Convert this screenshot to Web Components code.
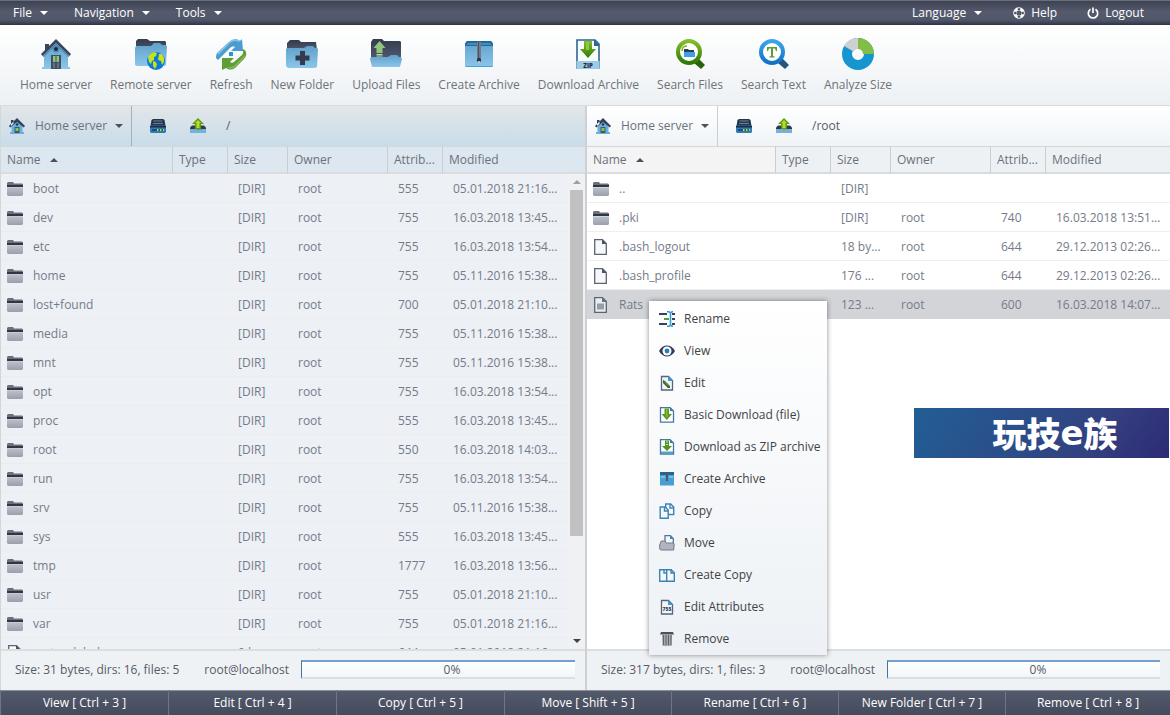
<!DOCTYPE html>
<html lang="en">
<head>
<meta charset="utf-8">
<meta name="viewport" content="width=device-width, initial-scale=1">
<title>File manager</title>
<style>
  html, body { height: 100%; }
  body { margin: 0; font: 12px/16px "Open Sans", sans-serif; color: #6b717c; background: #fff; }
</style>
</head>
<body>
<fm-app></fm-app>

<script>
/* ---------- icons ---------- */
const defs = `<defs>
<linearGradient id="b" x1="0" y1="0" x2="0" y2="1"><stop offset="0" stop-color="#5fa0ca"/><stop offset="1" stop-color="#8cc6ea"/></linearGradient>
<linearGradient id="d" x1="0" y1="0" x2="0" y2="1"><stop offset="0" stop-color="#333c4e"/><stop offset="1" stop-color="#4e586c"/></linearGradient>
<linearGradient id="g" x1="0" y1="0" x2="0" y2="1"><stop offset="0" stop-color="#86bd28"/><stop offset="1" stop-color="#2e7a06"/></linearGradient>
<linearGradient id="s" x1="0" y1="0" x2="0" y2="1"><stop offset="0" stop-color="#b9bec8"/><stop offset="1" stop-color="#9a9fac"/></linearGradient>
<linearGradient id="z" x1="0" y1="0" x2="0" y2="1"><stop offset="0" stop-color="#3aa5ee"/><stop offset="1" stop-color="#1272c4"/></linearGradient></defs>`;

const page16 = '<path d="M2.5 1.5h7l4 4v9.500h-11z" fill="#f4f6fa" stroke="#55657f" stroke-width="1.300"/><path d="M9 1l5 5H9z" fill="#4397d3"/>';
const icons = {
  home: [32, `<path d="M4 17L16 5l12 12v12h2v2H2v-2h2z" fill="url(#b)"/><path d="M5 6h4v5l-4 4z" fill="#3c4558"/><path d="M16 1L1 16l1.500 2L16 5l13.500 13 1.500-2z" fill="#39435a"/><path d="M2.500 18L16 5l13.500 13-1 1L16 7 3.500 19z" fill="#4c86ac"/><circle cx="16" cy="11" r="2" fill="#1b2636"/><circle cx="16" cy="11" r="3" fill="none" stroke="#4d83a8"/><path d="M11 17h10v14H11z" fill="#3f5265"/><path d="M13 18h2.500v6H13zM16.500 18H19v6h-2.500z" fill="#96c47c"/><path d="M13 25h2v5h-2zM17 25h2v5h-2z" fill="#65717e"/>`],
  home16: [16, `<path d="M2.500 8L8 3l5.500 5v6H15v2H1v-2h1.500z" fill="#69b0de"/><path d="M2 2h2.500v4L2 8zM8 0L0 8l1.200 1.500L8 4l6.800 5.500L16 8z" fill="#34405a"/><circle cx="8" cy="6.500" r="1.200" fill="#27374b"/><path d="M5.500 9h5v6h-5z" fill="#3f5a66"/><path d="M6.500 10h3v3h-3z" fill="#8cc34a"/>`],
  remote: [32, `<path d="M1 13V3l2-2h9l3 2h15l1 1v10z" fill="url(#d)"/><path d="M0 10l1-2h15l3-3h6l2 2h4l1 1-1 19-2 1H2l-2-1z" fill="url(#b)"/><circle cx="21" cy="23" r="9" fill="#0f79d6"/><path d="M13 19c1-2 3-4 6-5l3 1-1 3-2 1v3l-2 1-1 3-2-2zM18 23l3 1 1 3-2 4-2-3zM24 16l3 0 2 4 0 4-2 3-1-4-3-1z" fill="#c2e41d"/>`],
  refresh: [32, `<path d="M1 20C1 18 1 16 3 14L14 4c3-3 8-4 11-1l2-2 1 12H16l4-4c-2-1-4 0-5 1l-9 9-3 3z" fill="#4b9ccf"/><path d="M3 14L14 4c3-3 8-4 11-1l-1 1c-3-2-7-1-10 2L3 17z" fill="#8bc2e4"/><path d="M27 11c3 0 5 3 4 7-1 2-2 3-4 5l-7 7c-3 2-6 2-9 0l-4 2V20h12l-4 4c1 1 3 1 4 0l8-7c1-1 2-3 0-6z" fill="#5f9d35"/><path d="M31 16c-1 3-2 4-4 6l-7 7c-2 2-6 2-8 0 4 0 6 0 8-2l8-8z" fill="#85b957"/><path d="M14 14h4v4h-4z" fill="#2c94d2"/>`],
  newfolder: [32, `<path d="M1 12V5l3-3h9l2 2h15l1 8z" fill="url(#d)"/><path d="M0 11l1-1h17l3-2h6l2 2h2l1 1-1 18-2 1H2l-2-2z" fill="url(#b)"/><path d="M14 13h5v4.500h4.500v5H19V27h-5v-4.500H9.500v-5H14z" fill="#333b4c"/>`],
  upload: [32, `<path d="M1 20V4l2-3h9l2 2h16l1 1v15z" fill="url(#d)"/><path d="M9.500 3l6 7h-3v5h-6v-5h-3z" fill="#93c47e"/><path d="M6.500 16h6v1.500h-6zM6.500 18.500h6V20h-6z" fill="#b7dba2"/><path d="M0 21l1-2h17l3-2h6l2 2h2l1 2-2 8H2z" fill="url(#b)"/>`],
  archive: [32, `<path d="M2 5l2-2h24l2 2v23l-1 1H3l-1-1z" fill="url(#b)"/><path d="M2 6l2-3h24l2 3v2H2z" fill="#24699a"/><path d="M5 5h9v2H3zM18 5h9l2 2H18z" fill="#3f8ebd"/><path d="M14 4h4v16h-4z" fill="#727c8c"/><path d="M15 4h1v17h-1z" fill="#4a5464"/><circle cx="16" cy="22" r="2.200" fill="#2b3542"/><circle cx="16" cy="24" r="1" fill="#c7e3f4"/><path d="M2.500 28.500h27" stroke="#3ea7e2"/>`],
  download: [32, `<path d="M5 2h18l4 4v24H5z" fill="#f8fbfd" stroke="#2d6690" stroke-width="1.600"/><path d="M22 1.500L28 8h-6z" fill="#2d6690"/><path d="M4.500 23h23v8h-23z" fill="#9ccbe8"/><path d="M12 3h8v8h4l-8 9-8-9h4z" fill="url(#g)"/><path d="M14 4h3v8h-3z" fill="#93c443"/><text x="16" y="29.500" text-anchor="middle" font-family="Open Sans, sans-serif" font-weight="800" font-size="6" fill="#20304a">ZIP</text>`],
  sfiles: [32, `<path d="M21 22l3-2 7 7-4 4-7-6z" fill="#286307"/><circle cx="15" cy="14" r="11" fill="#fff" stroke="url(#g)" stroke-width="4"/><path d="M10 11h4l1 1h5v3H10z" fill="#333c4e"/><path d="M10 14h11v5H10z" fill="#3ba0e5"/><path d="M8 13c0-3 2-5 5-5" stroke="#7db52d" stroke-width="1.500" fill="none"/>`],
  stext: [32, `<path d="M22 22l3-2 7 7-4 4-7-6z" fill="#24547f"/><circle cx="15" cy="14" r="11" fill="#fff" stroke="url(#z)" stroke-width="4"/><path d="M10 9h10v4h-1l-1-2.500h-2v7.500l1.500.5v1h-5v-1l1.500-.5v-7.500h-2L11 13h-1z" fill="#5d9d35"/>`],
  analyze: [32, `<circle cx="16" cy="16" r="11" fill="none" stroke="#1596d1" stroke-width="10"/><path d="M16 0a16 16 0 0 1 16 16H21a5 5 0 0 0-5-5z" fill="#82bd45"/><path d="M16 0v11a5 5 0 0 0-4.500 2.500L2 8A16 16 0 0 1 16 0z" fill="#cdd1d4"/>`],
  folder: [16, `<path d="M0 5.500V2l1-1h5l1 1.500h8l1 1v2z" fill="#6b707a"/><path d="M0 4h16v2.200H0z" fill="#2f3746"/><path d="M0 7h16v7l-1 1H1l-1-1z" fill="url(#s)"/>`],
  file: [16, `<path d="M1.700.700H9.500L13.300 4.500v10.800H1.700z" fill="#f7f8fb" stroke="#5b6474" stroke-width="1.300"/><path d="M9 .500L13.500 5H9z" fill="#4a5362"/>`],
  text: [16, `<path d="M1.700.700H9.500L13.300 4.500v10.800H1.700z" fill="#e9ecf1" stroke="#5b6474" stroke-width="1.300"/><path d="M9 .500L13.500 5H9z" fill="#6a7280"/><path d="M4 6.500h7v6H4z" fill="#989da8"/>`],
  drive: [16, `<path d="M3 1h10l1.500 1 1 6H.500l1-6z" fill="#26344a"/><path d="M3.500 3h9M3 5.500h10" stroke="#6f8094"/><path d="M0 7.500h16V14l-1 1H1l-1-1z" fill="#2d7db8"/><path d="M0 8h16v1.500H0z" fill="#1d2c42"/><path d="M2 11h12v2H2z" fill="#214f73"/><path d="M7 11h1.500v2H7zM10 11h1.500v2H10zM13 11h1v2h-1z" fill="#b5dd2c"/>`],
  up: [16, `<path d="M0 9.500l2-2h12l2 2v2H0z" fill="#2e3a50"/><path d="M0 11h5l1 1h5l1-1h4v4H0z" fill="#72b3db"/><path d="M8 0l6 6h-3v5H5V6H2z" fill="#5b9b0a"/><path d="M8 2l3 3H9.500v5h-3V5H5z" fill="#b5dd22"/>`],
  rename: [16, `<path d="M0 3h8M0 13h8M13 3h3M13 13h3" stroke="#36405a" stroke-width="2"/><path d="M5 8h5" stroke="#58a038" stroke-width="2"/><path d="M13 8h3" stroke="#36405a" stroke-width="2"/><path d="M8 .800h2l1.500 1L13 .800h1M8 15.200h2l1.500-1 1.500 1h1M11.500 1v14" stroke="#3b9ad6" stroke-width="1.600" fill="none"/>`],
  view: [16, `<path d="M0 8c4-7.300 12-7.300 16 0-4 7.300-12 7.300-16 0z" fill="#333d54"/><circle cx="8" cy="8" r="4.500" fill="#fff"/><circle cx="8" cy="8" r="2.400" fill="#247ebd"/>`],
  edit: [16, page16 + `<path d="M4 5l2 1 5 5v2H9L4 8z" fill="#2d5726"/><path d="M5 6.500l5 5" stroke="#89b648"/>`],
  dl: [16, `<path d="M1.500.700h9.500l3.500 3.500v11h-13z" fill="#fff" stroke="#4a7899" stroke-width="1.300"/><path d="M11 0l4 4h-4z" fill="#347aa9"/><path d="M5.500 1.500h4.500V7h3l-5.200 6L2.500 7h3z" fill="#5a9a1e"/><path d="M7 2h1.500v8H7z" fill="#82b93c"/>`],
  zip: [16, `<path d="M1.500.700h9.500l3.500 3.500v11h-13z" fill="#fff" stroke="#4a7899" stroke-width="1.300"/><path d="M11 0l4 4h-4z" fill="#347aa9"/><path d="M2 12.500h12v2.800H2z" fill="#579fc9"/><path d="M6 1.500h4V7h3l-5 5-5-5h3z" fill="#4c9522"/><path d="M7 2.500h2v1H7zM7 5h2v1H7z" fill="#cce6a9"/>`],
  arc: [16, `<path d="M1 2l1-1h12l1 1v12.500H1z" fill="#4b9ed3"/><path d="M1 1h14v3H1z" fill="#256592"/><path d="M7 1h2v9H7z" fill="#45596d"/><path d="M2 5h4v2H2zM10 5h4v2h-4z" fill="#79bce4"/>`],
  copy: [16, `<path d="M6.700 1h5l3 3v7.500h-8z" fill="#fff" stroke="#3f83b1" stroke-width="1.400"/><path d="M11 1v4h4" fill="none" stroke="#3f83b1" stroke-width="1.400"/><path d="M1.200 4h5l3 3v8.200h-8z" fill="#f3f8fc" stroke="#3f83b1" stroke-width="1.400"/><path d="M5.500 4v4h4" fill="none" stroke="#3f83b1" stroke-width="1.400"/>`],
  move: [16, `<path d="M6 .700h5.500l2.800 3V11H6z" fill="#f3f7fb" stroke="#59729a" stroke-width="1.300"/><path d="M11 0l4 4h-4z" fill="#358ac7"/><path d="M.700 10l1.500-4h4l1 2h7l1 1-.5 6H1.700l-1-1z" fill="#b1b4c0" stroke="#747989"/>`],
  ccopy: [16, `<path d="M.700 2.700h7v11.600h-7zM7.700 2.700h4.500l3.100 3v8.600H7.700z" fill="#f3f8fc" stroke="#3f83b1" stroke-width="1.400"/><path d="M5 2v4h3M12 2v4h4" fill="none" stroke="#3f83b1" stroke-width="1.400"/>`],
  attr: [16, page16 + `<text x="8" y="12" text-anchor="middle" font-family="Open Sans, sans-serif" font-weight="800" font-size="5" fill="#2d3b58">755</text>`],
  remove: [16, `<path d="M2 1h12l1 2.500H1z" fill="#4b505b"/><path d="M3 4h10l-.5 11h-9z" fill="#a5a8ad"/><path d="M4.500 4v10M7 4v10M9.500 4v10M12 4v10" stroke="#5f636b"/>`],
  help: [12, `<circle cx="6" cy="6" r="4.200" fill="none" stroke="#fff" stroke-width="3.200"/><path d="M6 1.200v2M6 8.800v2M1.200 6h2M8.800 6h2" stroke="#4d5467" stroke-width="2.600"/>`],
  power: [12, `<path d="M3.500 2.300a4.700 4.700 0 1 0 5 0M6 .500v5.500" fill="none" stroke="#fff" stroke-width="1.700"/>`],
  down: [8, `<path d="M0 2h8L4 6z" fill="currentColor"/>`],
  asc: [8, `<path d="M0 6h8L4 2z" fill="currentColor"/>`]
};

function define(name, css, html) {
  const tpl = document.createElement('template');
  customElements.define(name, class extends HTMLElement {
    constructor() { super(); this.attachShadow({ mode: 'open' }); }
    connectedCallback() {
      if (this.shadowRoot.firstChild) return;
      tpl.innerHTML = `<style>*{box-sizing:border-box}button{font:inherit;color:inherit;background:none;border:0;padding:0;margin:0;cursor:pointer}${css}</style>` +
        (typeof html === 'function' ? html(this) : html);
      this.shadowRoot.append(tpl.content.cloneNode(true));
    }
  });
}

define('fm-icon', ':host{display:inline-block;flex:none;line-height:0}svg{display:block}', el => {
  const [size, art] = icons[el.getAttribute('name')];
  return `<svg width="${size}" height="${size}" viewBox="0 0 ${size} ${size}" aria-hidden="true">${defs}${art}</svg>`;
});

define('fm-menubar', `
  :host{display:block;flex:none}
  nav{display:flex;justify-content:space-between;height:25px;padding:0 14px 0 0;color:#fff;font-weight:500;
    background:linear-gradient(#6d6e73 0 1px,#3c4354 1px,#555b6c 12px,#50576a 20px,#363c4c 24px,#2b3040)}
  div{display:flex}
  button,a{display:flex;align-items:center;gap:8px;padding:0 13px;color:inherit;text-decoration:none}
  a{gap:6px;padding:0 12px 0 18px}
`, `<nav aria-label="Main">
  <div><button>File <fm-icon name="down"></fm-icon></button><button>Navigation <fm-icon name="down"></fm-icon></button><button>Tools <fm-icon name="down"></fm-icon></button></div>
  <div><button>Language <fm-icon name="down"></fm-icon></button><a href="#help"><fm-icon name="help"></fm-icon>Help</a><a href="#logout"><fm-icon name="power"></fm-icon>Logout</a></div>
</nav>`);

define('fm-tool', `
  :host{display:block}
  button{display:flex;flex-direction:column;align-items:center;gap:7px;padding:13px 9px 0;white-space:nowrap}
`, el => `<button><fm-icon name="${el.getAttribute('icon')}"></fm-icon><span><slot></slot></span></button>`);

define('fm-toolbar', `
  :host{display:flex;flex:none;box-sizing:border-box;height:81px;padding:0 11px;color:#6f7377;background:linear-gradient(#fff,#edf1f4);border-bottom:1px solid #d9dbdd}
`, '<slot></slot>');

define('fm-location', `
  :host{display:flex;flex:none;height:40px;background:var(--bar)}
  button{display:flex;align-items:center}
  .server{gap:8px;padding:0 8px;border-right:1px solid var(--split)}
  .server span{padding-left:2px}
  .server fm-icon[name=down]{color:#4a515c}
  .tool{padding:0 0 0 18px}
  .tool + .tool{padding-left:24px}
  output{align-self:center;padding-left:20px;color:#555b66}
`, el => `<button class="server" aria-haspopup="menu"><fm-icon name="home16"></fm-icon><span>Home server</span><fm-icon name="down"></fm-icon></button>
  <button class="tool" aria-label="Drives"><fm-icon name="drive"></fm-icon></button>
  <button class="tool" aria-label="Up"><fm-icon name="up"></fm-icon></button>
  <output>${el.getAttribute('path')}</output>`);

define('fm-files', `
  :host{display:block;flex:1;min-height:0;position:relative;overflow:hidden}
  table{width:100%;table-layout:fixed;border-collapse:separate;border-spacing:0}
  th,td{white-space:nowrap;overflow:hidden;text-align:left;font-weight:400}
  th{height:28px;padding:0 0 0 6px;background:var(--head);border-top:1px solid #d3d7da;border-bottom:2px solid #d9dde0;border-right:1px solid #c9ced3}
  th:first-child{background:var(--head-sorted)}
  th:last-child{border-right:0}
  th:first-child span{display:flex;align-items:center;gap:9px}
  th:first-child fm-icon{color:#4a515c}
  td{height:29px;padding:2px 0 0 10px;border-bottom:1px solid var(--line)}
  td:first-child{padding-left:6px}
  td:first-child span{display:flex;align-items:center;gap:10px}
  td{color:#757b8a}
  tr.sel td{background:#d2d4d8;border-color:#d2d4d8}
  .scroll{position:absolute;top:28px;right:0;bottom:0;width:17px;display:flex;flex-direction:column;align-items:center;background:#f0f1f3}
  .scroll fm-icon{padding:4px 0;color:#3d424a}
  .scroll fm-icon:first-child{color:#a0a0a0}
  .track{flex:1;width:13px}
  .thumb{height:78%;background:#c1c1c1}
`, el => {
  const rows = JSON.parse(el.querySelector('script').textContent);
  const body = rows.map(([icon, name, size, owner, attr, mod, sel]) =>
    `<tr${sel ? ' class="sel"' : ''}><td><span><fm-icon name="${icon}"></fm-icon>${name}</span></td><td></td><td>${size}</td><td>${owner}</td><td>${attr}</td><td>${mod}</td></tr>`).join('');
  return `<table><colgroup><col><col style="width:55px"><col style="width:60px"><col style="width:100px"><col style="width:55px"><col style="width:${el.getAttribute('last')}"></colgroup>
  <thead><tr><th><span>Name <fm-icon name="asc"></fm-icon></span></th><th>Type</th><th>Size</th><th>Owner</th><th>Attrib...</th><th>Modified</th></tr></thead>
  <tbody>${body}</tbody></table>` + (el.hasAttribute('scroll') ? '<div class="scroll"><fm-icon name="asc"></fm-icon><div class="track"><div class="thumb"></div></div><fm-icon name="down"></fm-icon></div>' : '');
});

define('fm-status', `
  :host{display:flex;flex:none;box-sizing:border-box;align-items:center;height:41px;padding:0 10px 2px 14px;color:#565c66;background:#eff2f5;border-top:2px solid #dadee1}
  .user{padding:0 12px 0 25px}
  .bar{flex:1;height:19px;overflow:hidden;border-left:1px solid #3f75a8;border-top:2px solid #74a0cb;border-bottom:2px solid #dadee1;background:linear-gradient(#fff,#f3f6f8)}
  .bar div{width:300px;line-height:16px;text-align:center}
`, el => `<span>${el.getAttribute('summary')}</span><span class="user">root@localhost</span><div class="bar" role="progressbar" aria-label="Progress" aria-valuenow="0"><div>0%</div></div>`);

define('fm-panel', `
  :host{display:flex;flex-direction:column;min-width:0;position:relative;background:#fff;
    --bar:linear-gradient(#fff,#eff3f6);--split:#c9ced3;--head:#eef1f4;--head-sorted:#f4f4f4;--line:#efefef}
  :host([active]){background:#edf0f5;border-left:1px solid #d3d7da;border-right:2px solid #cdd1d5;
    --bar:linear-gradient(#e2e6e9,#c9dcea);--split:#a3b0bd;--head:#dce7ef;--head-sorted:#dce7ef;--line:#ecebee}
`, '<slot></slot>');

define('fm-context', `
  :host{display:block;position:absolute;left:62px;top:195px;z-index:2;padding:1px 0;color:#3f4246;
    background:linear-gradient(#fff,#edf1f5);box-shadow:0 0 5px rgba(0,0,0,.45)}
  button{display:flex;align-items:center;gap:9px;width:100%;height:32px;padding:1px 7px 0 10px;white-space:nowrap}
`, () => [['rename','Rename'],['view','View'],['edit','Edit'],['dl','Basic Download (file)'],['zip','Download as ZIP archive'],['arc','Create Archive'],['copy','Copy'],['move','Move'],['ccopy','Create Copy'],['attr','Edit Attributes'],['remove','Remove']]
  .map(([i, t]) => `<button role="menuitem"><fm-icon name="${i}"></fm-icon>${t}</button>`).join(''));

define('fm-banner', `
  :host{position:absolute;right:1px;top:302px;width:255px;height:50px;display:flex;align-items:center;justify-content:center;padding-left:27px;box-sizing:border-box;
    font:900 34px/50px "Noto Sans CJK SC",sans-serif;color:#fff;background:linear-gradient(125deg,#225e95,#2d4a86 50%,#34407f 70%,#2d2a76)}
  ::slotted(span){font-family:"DejaVu Sans",sans-serif;font-weight:700}
`, '<slot></slot>');

define('fm-keys', `
  :host{display:grid;flex:none;grid-template-columns:168fr 168fr 168fr 167fr 167fr 167fr 165fr;height:25px;color:#fff;font-weight:500;
    background:linear-gradient(#8b9098 0 1px,#535a6b 1px,#454b5c)}
  button{border-left:1px solid #6f7584;white-space:nowrap;padding-top:1px}
`, () => ['View [ Ctrl + 3 ]','Edit [ Ctrl + 4 ]','Copy [ Ctrl + 5 ]','Move [ Shift + 5 ]','Rename [ Ctrl + 6 ]','New Folder [ Ctrl + 7 ]','Remove [ Ctrl + 8 ]'].map(t => `<button>${t}</button>`).join(''));

const dirs = [['boot','555','05.01.2018 21:16'],['dev','755','16.03.2018 13:45'],['etc','755','16.03.2018 13:54'],['home','755','05.11.2016 15:38'],['lost+found','700','05.01.2018 21:10'],['media','755','05.11.2016 15:38'],['mnt','755','05.11.2016 15:38'],['opt','755','16.03.2018 13:54'],['proc','555','16.03.2018 13:45'],['root','550','16.03.2018 14:03'],['run','755','16.03.2018 13:54'],['srv','755','05.11.2016 15:38'],['sys','555','16.03.2018 13:45'],['tmp','1777','16.03.2018 13:56'],['usr','755','05.01.2018 21:10'],['var','755','05.01.2018 21:16']];
const left = dirs.map(([n, a, m]) => ['folder', n, '[DIR]', 'root', a, m + '...']);
left.push(['file', '.autorelabel', '0 b...', 'root', '644', '05.01.2018 21:16...']);
const right = [['folder','..','[DIR]','','',''],['folder','.pki','[DIR]','root','740','16.03.2018 13:51...'],['file','.bash_logout','18 by...','root','644','29.12.2013 02:26...'],['file','.bash_profile','176 ...','root','644','29.12.2013 02:26...'],['text','Rats','123 ...','root','600','16.03.2018 14:07...',1]];
const data = rows => `<script type="application/json">${JSON.stringify(rows)}<\/script>`;

define('fm-app', `
  :host{display:flex;flex-direction:column;height:100vh;overflow:hidden}
  main{flex:1;min-height:0;display:grid;grid-template-columns:587fr 583fr;grid-template-rows:minmax(0,1fr)}
`, () => `<fm-menubar></fm-menubar>
<fm-toolbar><fm-tool icon="home">Home server</fm-tool><fm-tool icon="remote">Remote server</fm-tool><fm-tool icon="refresh">Refresh</fm-tool><fm-tool icon="newfolder">New Folder</fm-tool><fm-tool icon="upload">Upload Files</fm-tool><fm-tool icon="archive">Create Archive</fm-tool><fm-tool icon="download">Download Archive</fm-tool><fm-tool icon="sfiles">Search Files</fm-tool><fm-tool icon="stext">Search Text</fm-tool><fm-tool icon="analyze">Analyze Size</fm-tool></fm-toolbar>
<main>
  <fm-panel active><fm-location path="/"></fm-location><fm-files scroll last="142px">${data(left)}</fm-files><fm-status summary="Size: 31 bytes, dirs: 16, files: 5"></fm-status></fm-panel>
  <fm-panel><fm-location path="/root"></fm-location><fm-files last="124px">${data(right)}</fm-files><fm-status summary="Size: 317 bytes, dirs: 1, files: 3"></fm-status><fm-context role="menu"></fm-context><fm-banner>玩技<span>e</span>族</fm-banner></fm-panel>
</main>
<fm-keys></fm-keys>`);
</script>
</body>
</html>
